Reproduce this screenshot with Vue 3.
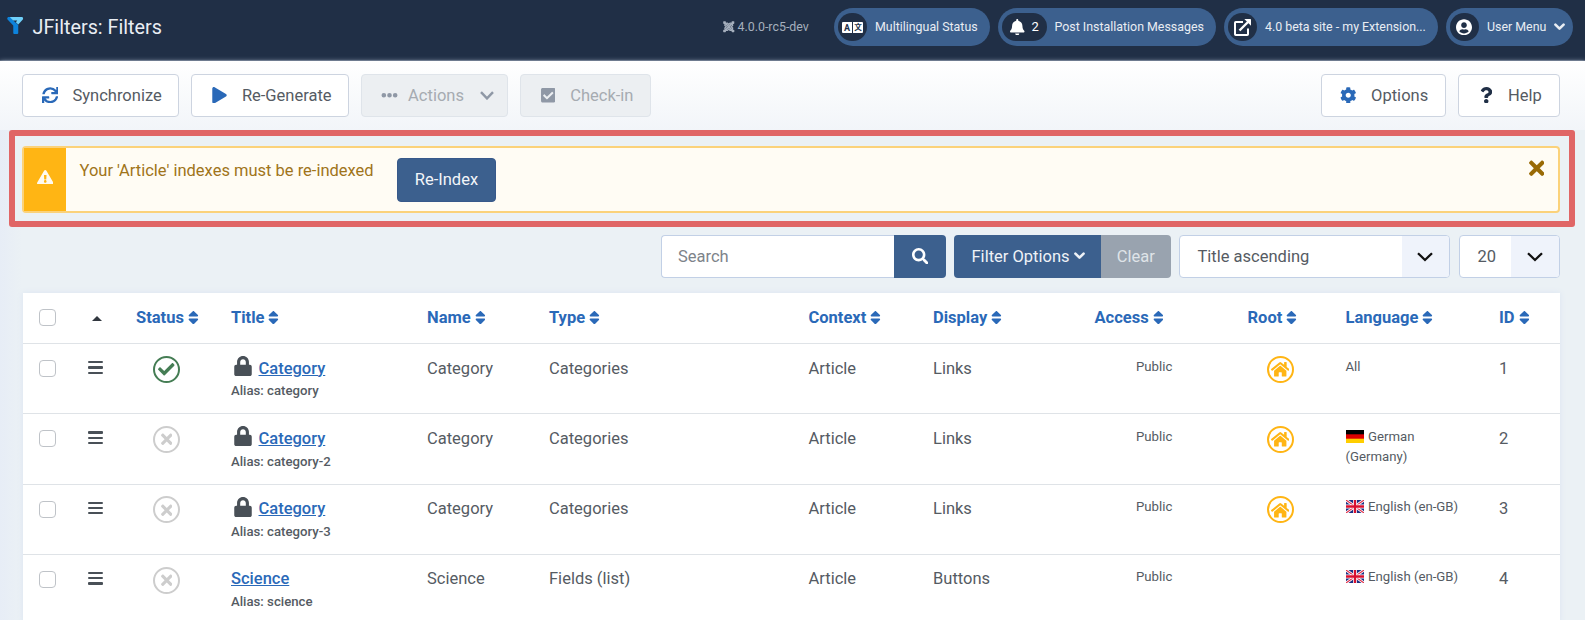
<script setup>
const icons = {
  sync: [512, 'M440.65 12.57l4 82.77A247.16 247.16 0 0 0 255.83 8C134.73 8 33.91 94.92 12.29 209.82A12 12 0 0 0 24.09 224h49.05a12 12 0 0 0 11.67-9.26 175.91 175.91 0 0 1 317-56.94l-101.46-4.86a12 12 0 0 0-12.57 12v47.41a12 12 0 0 0 12 12H500a12 12 0 0 0 12-12V12a12 12 0 0 0-12-12h-47.37a12 12 0 0 0-11.98 12.57zM255.83 432a175.61 175.61 0 0 1-146-77.8l101.8 4.87a12 12 0 0 0 12.57-12v-47.4a12 12 0 0 0-12-12H12a12 12 0 0 0-12 12V500a12 12 0 0 0 12 12h47.35a12 12 0 0 0 12-12.6l-4.15-82.57A247.17 247.17 0 0 0 255.83 504c121.11 0 221.93-86.92 243.55-201.82a12 12 0 0 0-11.8-14.18h-49.05a12 12 0 0 0-11.67 9.26A175.86 175.86 0 0 1 255.83 432z'],
  play: [448, 'M424.4 214.7L72.4 6.6C43.8-10.3 0 6.1 0 47.9V464c0 37.5 40.7 60.1 72.4 41.3l352-208c31.4-18.5 31.5-64.1 0-82.6z'],
  dots: [512, 'M8 256a72 72 0 1 0 144 0a72 72 0 1 0-144 0zM184 256a72 72 0 1 0 144 0a72 72 0 1 0-144 0zM360 256a72 72 0 1 0 144 0a72 72 0 1 0-144 0z'],
  checkin: [448, 'M400 480H48c-26.51 0-48-21.49-48-48V80c0-26.51 21.49-48 48-48h352c26.51 0 48 21.49 48 48v352c0 26.51-21.49 48-48 48zm-204.686-98.059l184-184c6.248-6.248 6.248-16.379 0-22.627l-22.627-22.627c-6.248-6.248-16.379-6.249-22.628 0L184 302.745l-70.059-70.059c-6.248-6.248-16.379-6.248-22.628 0l-22.627 22.627c-6.248 6.248-6.248 16.379 0 22.627l104 104c6.249 6.25 16.379 6.25 22.628.001z'],
  cog: [512, 'M487.4 315.7l-42.6-24.6c4.3-23.2 4.3-47 0-70.2l42.6-24.6c4.9-2.8 7.1-8.6 5.5-14-11.1-35.6-30-67.8-54.7-94.6-3.8-4.1-10-5.1-14.8-2.3L380.8 110c-17.9-15.4-38.5-27.3-60.8-35.1V25.8c0-5.6-3.9-10.5-9.4-11.7-36.7-8.2-74.3-7.8-109.2 0-5.5 1.2-9.4 6.1-9.4 11.7V75c-22.2 7.9-42.8 19.8-60.8 35.1L88.7 85.5c-4.9-2.8-11-1.9-14.8 2.3-24.7 26.7-43.6 58.9-54.7 94.6-1.7 5.4.6 11.2 5.5 14L67.3 221c-4.3 23.2-4.3 47 0 70.2l-42.6 24.6c-4.9 2.8-7.1 8.6-5.5 14 11.1 35.6 30 67.8 54.7 94.6 3.8 4.1 10 5.1 14.8 2.3l42.6-24.6c17.9 15.4 38.5 27.3 60.8 35.1v49.2c0 5.6 3.9 10.5 9.4 11.7 36.7 8.2 74.3 7.8 109.2 0 5.5-1.2 9.4-6.1 9.4-11.7v-49.2c22.2-7.9 42.8-19.8 60.8-35.1l42.6 24.6c4.9 2.8 11 1.9 14.8-2.3 24.7-26.7 43.6-58.9 54.7-94.6 1.5-5.5-.7-11.3-5.6-14.1zM256 336c-44.1 0-80-35.9-80-80s35.9-80 80-80 80 35.9 80 80-35.9 80-80 80z'],
  question: [384, 'M202.021 0C122.202 0 70.503 32.703 29.914 91.026c-7.363 10.58-5.093 25.086 5.178 32.874l43.138 32.709c10.373 7.865 25.132 6.026 33.253-4.148 25.049-31.381 43.63-49.449 82.757-49.449 30.764 0 68.816 19.799 68.816 49.631 0 22.552-18.617 34.134-48.993 51.164-35.423 19.86-82.299 44.576-82.299 106.405V320c0 13.255 10.745 24 24 24h72.471c13.255 0 24-10.745 24-24v-5.773c0-42.86 125.268-44.645 125.268-160.627C377.504 66.256 286.902 0 202.021 0zM192 373.459c-38.196 0-69.271 31.075-69.271 69.271 0 38.195 31.075 69.27 69.271 69.27s69.271-31.075 69.271-69.271-31.075-69.27-69.271-69.27z'],
  bell: [448, 'M224 512c35.32 0 63.97-28.65 63.97-64H160.03c0 35.35 28.65 64 63.97 64zm215.39-149.71c-19.32-20.76-55.47-51.99-55.47-154.29 0-77.7-54.48-139.9-127.94-155.16V32c0-17.67-14.32-32-31.98-32s-31.98 14.33-31.98 32v20.84C118.56 68.1 64.08 130.3 64.08 208c0 102.3-36.15 133.53-55.47 154.29-6 6.45-8.66 14.16-8.61 21.71.11 16.4 12.98 32 32.1 32h383.8c19.12 0 32-15.6 32.1-32 .05-7.55-2.61-15.27-8.61-21.71z'],
  user: [496, 'M248 8C111 8 0 119 0 256s111 248 248 248 248-111 248-248S385 8 248 8zm0 96c48.6 0 88 39.4 88 88s-39.4 88-88 88-88-39.4-88-88 39.4-88 88-88zm0 344c-58.7 0-111.3-26.6-146.5-68.2 18.8-35.4 55.6-59.8 98.5-59.8 2.4 0 4.8.4 7.1 1.1 13 4.2 26.6 6.9 40.9 6.9 14.3 0 28-2.7 40.9-6.9 2.3-.7 4.7-1.1 7.1-1.1 42.9 0 79.7 24.4 98.5 59.8C359.3 421.4 306.7 448 248 448z'],
  search: [512, 'M505 442.7L405.3 343c-4.5-4.5-10.6-7-17-7H372c27.6-35.3 44-79.7 44-128C416 93.1 322.9 0 208 0S0 93.1 0 208s93.1 208 208 208c48.3 0 92.7-16.4 128-44v16.3c0 6.4 2.5 12.5 7 17l99.7 99.7c9.4 9.4 24.6 9.4 33.9 0l28.3-28.3c9.4-9.4 9.4-24.6.1-34zM208 336c-70.7 0-128-57.2-128-128 0-70.7 57.2-128 128-128 70.7 0 128 57.2 128 128 0 70.7-57.2 128-128 128z'],
  warning: [576, 'M569.517 440.013C587.975 472.007 564.806 512 527.94 512H48.054c-36.937 0-59.999-40.055-41.577-71.987L246.423 23.985c18.467-32.009 64.72-31.951 83.154 0l239.94 416.028zM288 354c-25.405 0-46 20.595-46 46s20.595 46 46 46 46-20.595 46-46-20.595-46-46-46zm-43.673-165.346l7.418 136c.347 6.364 5.609 11.346 11.982 11.346h48.546c6.373 0 11.635-4.982 11.982-11.346l7.418-136c.375-6.874-5.098-12.654-11.982-12.654h-63.383c-6.884 0-12.356 5.78-11.981 12.654z'],
  lock: [448, 'M400 224h-24v-72C376 68.2 307.8 0 224 0S72 68.2 72 152v72H48c-26.5 0-48 21.5-48 48v192c0 26.5 21.5 48 48 48h352c26.5 0 48-21.5 48-48V272c0-26.5-21.5-48-48-48zm-104 0H152v-72c0-39.7 32.3-72 72-72s72 32.3 72 72v72z'],
  check: [512, 'M173.898 439.404l-166.4-166.4c-9.997-9.997-9.997-26.206 0-36.204l36.203-36.204c9.997-9.998 26.207-9.998 36.204 0L192 312.69 432.095 72.596c9.997-9.997 26.207-9.997 36.204 0l36.203 36.204c9.997 9.997 9.997 26.206 0 36.204l-294.4 294.401c-9.998 9.997-26.207 9.997-36.204-.001z'],
  times: [352, 'M242.72 256l100.07-100.07c12.28-12.28 12.28-32.19 0-44.48l-22.24-22.24c-12.28-12.28-32.19-12.28-44.48 0L176 189.28 75.93 89.21c-12.28-12.28-32.19-12.28-44.48 0L9.21 111.45c-12.28 12.28-12.28 32.19 0 44.48L109.28 256 9.21 356.07c-12.28 12.28-12.28 32.19 0 44.48l22.24 22.24c12.28 12.28 32.2 12.28 44.48 0L176 322.72l100.07 100.07c12.28 12.28 32.2 12.28 44.48 0l22.24-22.24c12.28-12.28 12.28-32.19 0-44.48L242.72 256z'],
  home: [576, 'M280.37 148.26L96 300.11V464a16 16 0 0 0 16 16l112.06-.29a16 16 0 0 0 15.92-16V368a16 16 0 0 1 16-16h64a16 16 0 0 1 16 16v95.64a16 16 0 0 0 16 16.05L464 480a16 16 0 0 0 16-16V300L295.67 148.26a12.19 12.19 0 0 0-15.3 0zM571.6 251.47L488 182.56V44.05a12 12 0 0 0-12-12h-56a12 12 0 0 0-12 12v72.61L318.47 43a48 48 0 0 0-61 0L4.34 251.47a12 12 0 0 0-1.6 16.9l25.5 31A12 12 0 0 0 45.15 301l235.22-193.74a12.19 12.19 0 0 1 15.3 0L530.9 301a12 12 0 0 0 16.9-1.6l25.5-31a12 12 0 0 0-1.7-16.93z'],
  sort: [320, 'M41 288h238c21.4 0 32.1 25.9 17 41L177 448c-9.4 9.4-24.6 9.4-33.9 0L24 329c-15.1-15.1-4.4-41 17-41zm255-105L177 64c-9.4-9.4-24.6-9.4-33.9 0L24 183c-15.1 15.1-4.4 41 17 41h238c21.4 0 32.1-25.9 17-41z'],
}
const Ico = (props) => {
  const [w, d] = icons[props.n]
  return h('svg', { viewBox: `0 0 ${w} 512`, fill: 'currentColor' }, [h('path', { d })])
}
Ico.props = ['n']

const columns = ['Status', 'Title', 'Name', 'Type', 'Context', 'Display', 'Access', 'Root', 'Language', 'ID']
const rows = [
  { id: 1, title: 'Category', alias: 'category', type: 'Categories', display: 'Links', lang: 'All', on: true, locked: true, root: true },
  { id: 2, title: 'Category', alias: 'category-2', type: 'Categories', display: 'Links', lang: 'German (Germany)', flag: 'de', locked: true, root: true },
  { id: 3, title: 'Category', alias: 'category-3', type: 'Categories', display: 'Links', lang: 'English (en-GB)', flag: 'gb', locked: true, root: true },
  { id: 4, title: 'Science', alias: 'science', type: 'Fields (list)', display: 'Buttons', lang: 'English (en-GB)', flag: 'gb' },
]
</script>

<script>
import { h } from 'vue'
</script>

<template>
  <div class="page">
    <header class="header">
      <svg class="logo" viewBox="0 0 16 17">
        <path d="M.9 0Q-.6 1.2.3 2.6L6 8.6V16q0 1 1 1h3q1 0 1-1V8L5 2.6 4.4 0Z" fill="#0d83dc" />
        <path d="M2.6 0H15q1.5.8.6 2.6L11 7.6 8.6 5.2 10 3.6H5.8Z" fill="#6fd0fa" />
      </svg>
      <h1>JFilters: Filters</h1>
      <div class="version">
        <svg viewBox="0 0 12 12" fill="none" stroke="currentColor">
          <path d="M2.3 2.3 9.7 9.7M9.7 2.3 2.3 9.7" stroke-width="1.8" />
          <path d="M2 4.6Q2 2 4.6 2.2L6 3.6 7.4 2.2Q10 2 10 4.6L8.5 6 10 7.4Q10 10 7.4 9.8L6 8.4 4.6 9.8Q2 10 2 7.4L3.5 6Z" stroke-width="1.5" />
          <path d="M1.6.2v2.8M.2 1.6H3M10.4.2v2.8M9 1.6h2.8M1.6 9v2.8M.2 10.4H3M10.4 9v2.8M9 10.4h2.8" stroke-width="2" />
        </svg>
        <span>4.0.0-rc5-dev</span>
      </div>
      <div class="pill multi">
        <span class="disc">
          <svg class="i-lang" viewBox="0 0 21 11">
            <path d="M1 0h9v11H1q-1 0-1-1V1q0-1 1-1ZM11 0h9q1 0 1 1v9q0 1-1 1h-9Z" fill="#fff" />
            <text x="5" y="8.7" class="glyph">A</text>
            <text x="16" y="8.4" class="glyph cjk">文</text>
          </svg>
        </span>
        <span class="ptext">Multilingual Status</span>
      </div>
      <div class="pill post">
        <span class="disc wide"><Ico n="bell" class="i-bell" /><span>2</span></span>
        <span class="ptext">Post Installation Messages</span>
      </div>
      <div class="pill site">
        <span class="disc">
          <svg class="i-ext" viewBox="0 0 17 17">
            <path d="M9 3H1.8Q1 3 1 3.8v11.4q0 .8.8.8h11.4q.8 0 .8-.8V9.5" fill="none" stroke="#fff" stroke-width="2" />
            <path d="M5.5 11.5 14 3" stroke="#fff" stroke-width="2.4" />
            <path d="M10.3 0H16.4q.6 0 .6.6V6.7Z" fill="#fff" />
          </svg>
        </span>
        <span class="ptext">4.0 beta site - my Extension...</span>
      </div>
      <div class="pill user">
        <span class="disc"><Ico n="user" class="i-user" /></span>
        <span class="ptext">User Menu</span>
        <svg class="i-down" viewBox="0 0 11 8"><path d="M1.4 1.6 5.5 5.7 9.6 1.6" class="bold" /></svg>
      </div>
    </header>

    <div class="toolbar">
      <button class="tb sync"><Ico n="sync" /><span>Synchronize</span></button>
      <button class="tb regen"><Ico n="play" /><span>Re-Generate</span></button>
      <button class="tb off actions">
        <Ico n="dots" /><span>Actions</span>
        <svg class="caret" viewBox="0 0 14 9"><path d="M1 1.2 7 7.4 13 1.2" fill="none" stroke="currentColor" stroke-width="2.4" /></svg>
      </button>
      <button class="tb off checkin"><Ico n="checkin" /><span>Check-in</span></button>
      <button class="tb options"><Ico n="cog" /><span>Options</span></button>
      <button class="tb help"><Ico n="question" /><span>Help</span></button>
    </div>

    <main>
      <section class="frame">
        <div class="alert">
          <div class="mark"><Ico n="warning" /></div>
          <p>Your 'Article' indexes must be re-indexed</p>
          <button class="reindex">Re-Index</button>
          <Ico n="times" class="close" />
        </div>
      </section>

      <div class="filters">
        <div class="search"><span>Search</span></div>
        <button class="go"><Ico n="search" /></button>
        <button class="fopt"><span>Filter Options</span><svg viewBox="0 0 11 8"><path d="M1.4 1.6 5.5 5.7 9.6 1.6" class="bold" /></svg></button>
        <button class="clear"><span>Clear</span></button>
        <div class="select order">
          <span>Title ascending</span>
          <i><svg viewBox="0 0 16 10"><path d="M1 1.2 8 8 15 1.2" fill="none" stroke="#111" stroke-width="2.3" /></svg></i>
        </div>
        <div class="select limit">
          <span>20</span>
          <i><svg viewBox="0 0 16 10"><path d="M1 1.2 8 8 15 1.2" fill="none" stroke="#111" stroke-width="2.3" /></svg></i>
        </div>
      </div>

      <div class="table">
        <div class="row head">
          <div><span class="box"></span></div>
          <div><span class="up"></span></div>
          <div v-for="c in columns" :key="c"><span>{{ c }}</span><Ico n="sort" class="i-sort" /></div>
        </div>
        <div v-for="r in rows" :key="r.id" class="row">
          <div><span class="box"></span></div>
          <div><span class="bars"><b></b><b></b><b></b></span></div>
          <div><span class="ring" :class="r.on ? 'ok' : 'no'"><Ico :n="r.on ? 'check' : 'times'" /></span></div>
          <div>
            <div class="title"><Ico v-if="r.locked" n="lock" class="i-lock" /><a>{{ r.title }}</a></div>
            <div class="alias">Alias: {{ r.alias }}</div>
          </div>
          <div>{{ r.title }}</div>
          <div>{{ r.type }}</div>
          <div>Article</div>
          <div>{{ r.display }}</div>
          <div class="small access">Public</div>
          <div><span v-if="r.root" class="ring home"><Ico n="home" /></span></div>
          <div class="small lang">
            <svg v-if="r.flag === 'de'" class="flag" viewBox="0 0 18 13"><path d="M0 0h18v5H0z" /><path d="M0 4.3h18v5H0z" fill="#d00" /><path d="M0 8.7h18V13H0z" fill="#ffce00" /></svg>
            <svg v-else-if="r.flag === 'gb'" class="flag" viewBox="0 0 18 13">
              <path d="M0 0h18v13H0z" fill="#1c2f83" />
              <path d="M0 0 18 13M18 0 0 13" stroke="#fff" stroke-width="2.8" />
              <path d="M0 0 18 13M18 0 0 13" stroke="#e0304a" stroke-width="1.1" />
              <path d="M9 0v13M0 6.5h18" stroke="#fff" stroke-width="3.8" />
              <path d="M9 0v13M0 6.5h18" stroke="#d8102f" stroke-width="2.3" />
            </svg>{{ r.lang }}
          </div>
          <div>{{ r.id }}</div>
        </div>
      </div>
    </main>
  </div>
</template>

<style>
body { margin: 0; overflow: hidden; }
</style>

<style scoped>
* { box-sizing: border-box; }
.page { width: 1585px; height: 620px; overflow: hidden; background: #ebf1f5; font: 16.5px/24.8px Roboto, sans-serif; color: #555b63; }
svg { display: block; flex: none; }
button { font: inherit; margin: 0; padding: 0; cursor: pointer; }
.bold { fill: none; stroke: currentColor; stroke-width: 2.6; stroke-linecap: round; stroke-linejoin: round; }

.header { height: 61px; display: flex; align-items: flex-start; background: #202f46; border-bottom: 1px solid #48556b; color: #e9edf3; }
.logo { width: 16.5px; height: 17px; margin: 17px 0 0 7px; }
h1 { font-size: 19.8px; font-weight: 400; line-height: 24px; margin: 16px 0 0 9px; flex: 1; white-space: nowrap; }
.version { display: flex; align-items: center; gap: 3px; width: 111px; margin-top: 14px; font-size: 12.4px; color: #a5afbd; white-space: nowrap; }
.version svg { width: 11.5px; height: 11.5px; }
.version span { padding-top: 1px; }
.pill { height: 38px; margin-top: 8px; border-radius: 19px; background: #3c608e; display: flex; align-items: center; padding-left: 4px; font-size: 12.4px; white-space: nowrap; }
.multi { width: 156px; margin-right: 8px; }
.post { width: 218px; margin-right: 8px; }
.site { width: 214px; margin-right: 8px; }
.user { width: 127px; margin-right: 12px; }
.disc { width: 28.5px; height: 28.5px; border-radius: 15px; background: #202f46; display: flex; align-items: center; justify-content: center; margin-right: 8.5px; flex: none; color: #fff; }
.disc.wide { width: 45px; gap: 7px; margin-right: 7.5px; font-size: 13px; }
.i-lang { width: 21px; height: 11px; }
.glyph { font: 700 9px Roboto, sans-serif; text-anchor: middle; fill: #202f46; }
.cjk { font: 700 7.6px "Noto Sans CJK SC", sans-serif; }
.i-bell { width: 14.5px; height: 16.5px; }
.i-ext { width: 17px; height: 17px; }
.i-user { width: 16px; height: 16.5px; }
.i-down { width: 11px; height: 8px; margin-left: 8px; }

.toolbar { height: 69px; padding: 13px 25.5px 0 22px; display: flex; background: linear-gradient(#fff, #f2f5f9); box-shadow: 0 1px 5px #cfdbea; }
.tb { height: 43px; display: flex; align-items: center; border: 1px solid #cdd4e0; border-radius: 4px; background: #fff; color: #555b63; margin-right: 12.4px; white-space: nowrap; }
.tb span { padding-top: 1px; }
.tb svg { color: #2a69b8; height: 16.5px; margin-top: -1px; }
.tb.off { background: #eceff2; border-color: #dfe4ea; color: #a6abb1; }
.tb.off svg { color: #8f98a6; }
.sync { width: 157px; padding-left: 18.5px; gap: 14.5px; }
.sync svg { width: 16.5px; }
.regen { width: 157.5px; padding-left: 19.5px; gap: 15px; }
.regen svg { width: 15px; }
.actions { width: 146.5px; padding-left: 18.5px; gap: 10.3px; }
.actions svg { width: 17px; }
.tb.actions .caret { width: 14px; height: 9px; margin-left: 6px; }
.checkin { width: 131px; padding-left: 19.5px; gap: 15px; }
.checkin svg { width: 14.5px; }
.options { width: 124.5px; padding-left: 18px; gap: 14.5px; margin-left: auto; }
.options svg { width: 16.5px; }
.help { width: 101.5px; padding-left: 20.5px; gap: 16px; margin-right: 0; }
.tb.help svg { width: 12.5px; color: #202f46; }

main { padding: 0 10px 0 9px; background: linear-gradient(90deg, #e7edf6, #ebf1f5 22px); }
.frame { position: relative; height: 97px; border: 6px solid #e06666; border-radius: 3px; padding: 10px 9.5px 9px 7px; background: #ebf1f5; }
.alert { height: 67px; display: flex; align-items: flex-start; border: 2px solid #fbd27a; border-radius: 4px; background: #fffcf4; color: #a0741a; }
.mark { width: 42px; height: 100%; background: #ffb514; display: flex; align-items: center; justify-content: center; color: #fffaf0; }
.mark svg { width: 16.5px; height: 14.6px; margin-top: -5px; }
.alert p { margin: 10.5px 23.5px 0 13.5px; white-space: nowrap; }
.reindex { width: 98.5px; height: 44px; margin-top: 10px; border: 1px solid #38598a; border-radius: 4px; background: #3c608e; color: #f2f5f9; padding-top: 1px; }
.close { width: 15.5px; height: 22.5px; margin: 8.5px 13.5px 0 auto; color: #996a05; }

.filters { height: 66px; padding: 7.5px 15.5px 0 0; display: flex; justify-content: flex-end; white-space: nowrap; }
.filters > * { height: 43.5px; display: flex; align-items: center; flex: none; }
.filters span { padding-top: 2px; }
.search { width: 233px; border: 1px solid #c2d0e6; border-right: 0; border-radius: 4px 0 0 4px; background: #fff; padding-left: 16px; color: #7d838a; }
.go { width: 52px; justify-content: center; border: 0; border-radius: 0 4px 4px 0; background: #3c608e; color: #fff; margin-right: 8px; }
.go svg { width: 16.5px; height: 16.5px; margin-top: -1px; }
.fopt { width: 147px; padding-left: 17.5px; border: 0; border-radius: 4px 0 0 4px; background: #3c608e; color: #eef2f7; gap: 4px; }
.fopt svg { width: 11px; height: 8px; }
.clear { width: 69.5px; justify-content: center; border: 0; border-radius: 0 4px 4px 0; background: #99a3af; color: #dfe3e8; margin-right: 8px; }
.select { border: 1px solid #c2d0e6; border-radius: 4px; background: #fff; justify-content: space-between; padding-left: 18px; overflow: hidden; }
.select i { width: 47.5px; height: 100%; background: #eff3fb; display: flex; align-items: center; justify-content: center; }
.select i svg { width: 16px; height: 10px; margin-top: 1px; }
.order { width: 271.5px; margin-right: 8.5px; }
.limit { width: 101px; }

.table { width: 1537.5px; margin-left: 13.5px; background: #fff; box-shadow: 0 0 6px #dbe4f1; }
.row { display: grid; grid-template-columns: 43px 54.5px 95px 196px 122px 259.5px 124.5px 161.5px 153px 98px 153.5px 62px; padding: 12.6px 0 11.8px 16px; height: 70.3px; border-top: 1px solid #dfe3e7; }
.row.head { height: 50px; padding-top: 13px; border-top: 0; font-weight: 700; color: #2a69b8; }
.row.head > div { display: flex; align-items: center; height: 24.8px; white-space: nowrap; }
.i-sort { width: 10.8px; height: 17px; margin-left: 4px; margin-top: -1px; }
.box { display: block; width: 17px; height: 17px; border: 1px solid #bfc3c8; border-radius: 4px; background: #fff; margin-top: 3.5px; }
.head .box { margin-top: -1px; }
.up { border: 5px solid transparent; border-bottom: 5.5px solid #31373f; border-top: 0; margin-left: 10.5px; }
.bars { display: flex; flex-direction: column; gap: 3px; width: 15px; margin: 4.4px 0 0 6.5px; }
.bars b { height: 2.3px; background: #495057; border-radius: 1px; }
.ring { display: flex; align-items: center; justify-content: center; width: 27px; height: 27px; border: 2px solid; border-radius: 50%; margin: -.8px 0 0 17px; }
.ok { color: #457d54; }
.ok svg { width: 16.5px; height: 16.5px; }
.no { color: #cdcdcd; }
.no svg { width: 11.5px; height: 16.5px; }
.home { color: #ffb514; margin-left: 19px; }
.home svg { width: 18.5px; height: 16.5px; }
.title { display: flex; height: 24.8px; font-weight: 500; }
.title a { color: #2a69b8; text-decoration: underline; }
.i-lock { width: 18px; height: 20px; margin: -.5px 7px 0 2.5px; color: #495057; }
.alias { font-size: 13.2px; line-height: 19.8px; font-weight: 500; }
.small { font-size: 13.2px; line-height: 19.8px; }
.access { padding-left: 41.5px; }
.lang { width: 120px; }
.flag { display: inline-block; width: 18px; height: 13px; margin-right: 4.5px; vertical-align: -2px; }
</style>
